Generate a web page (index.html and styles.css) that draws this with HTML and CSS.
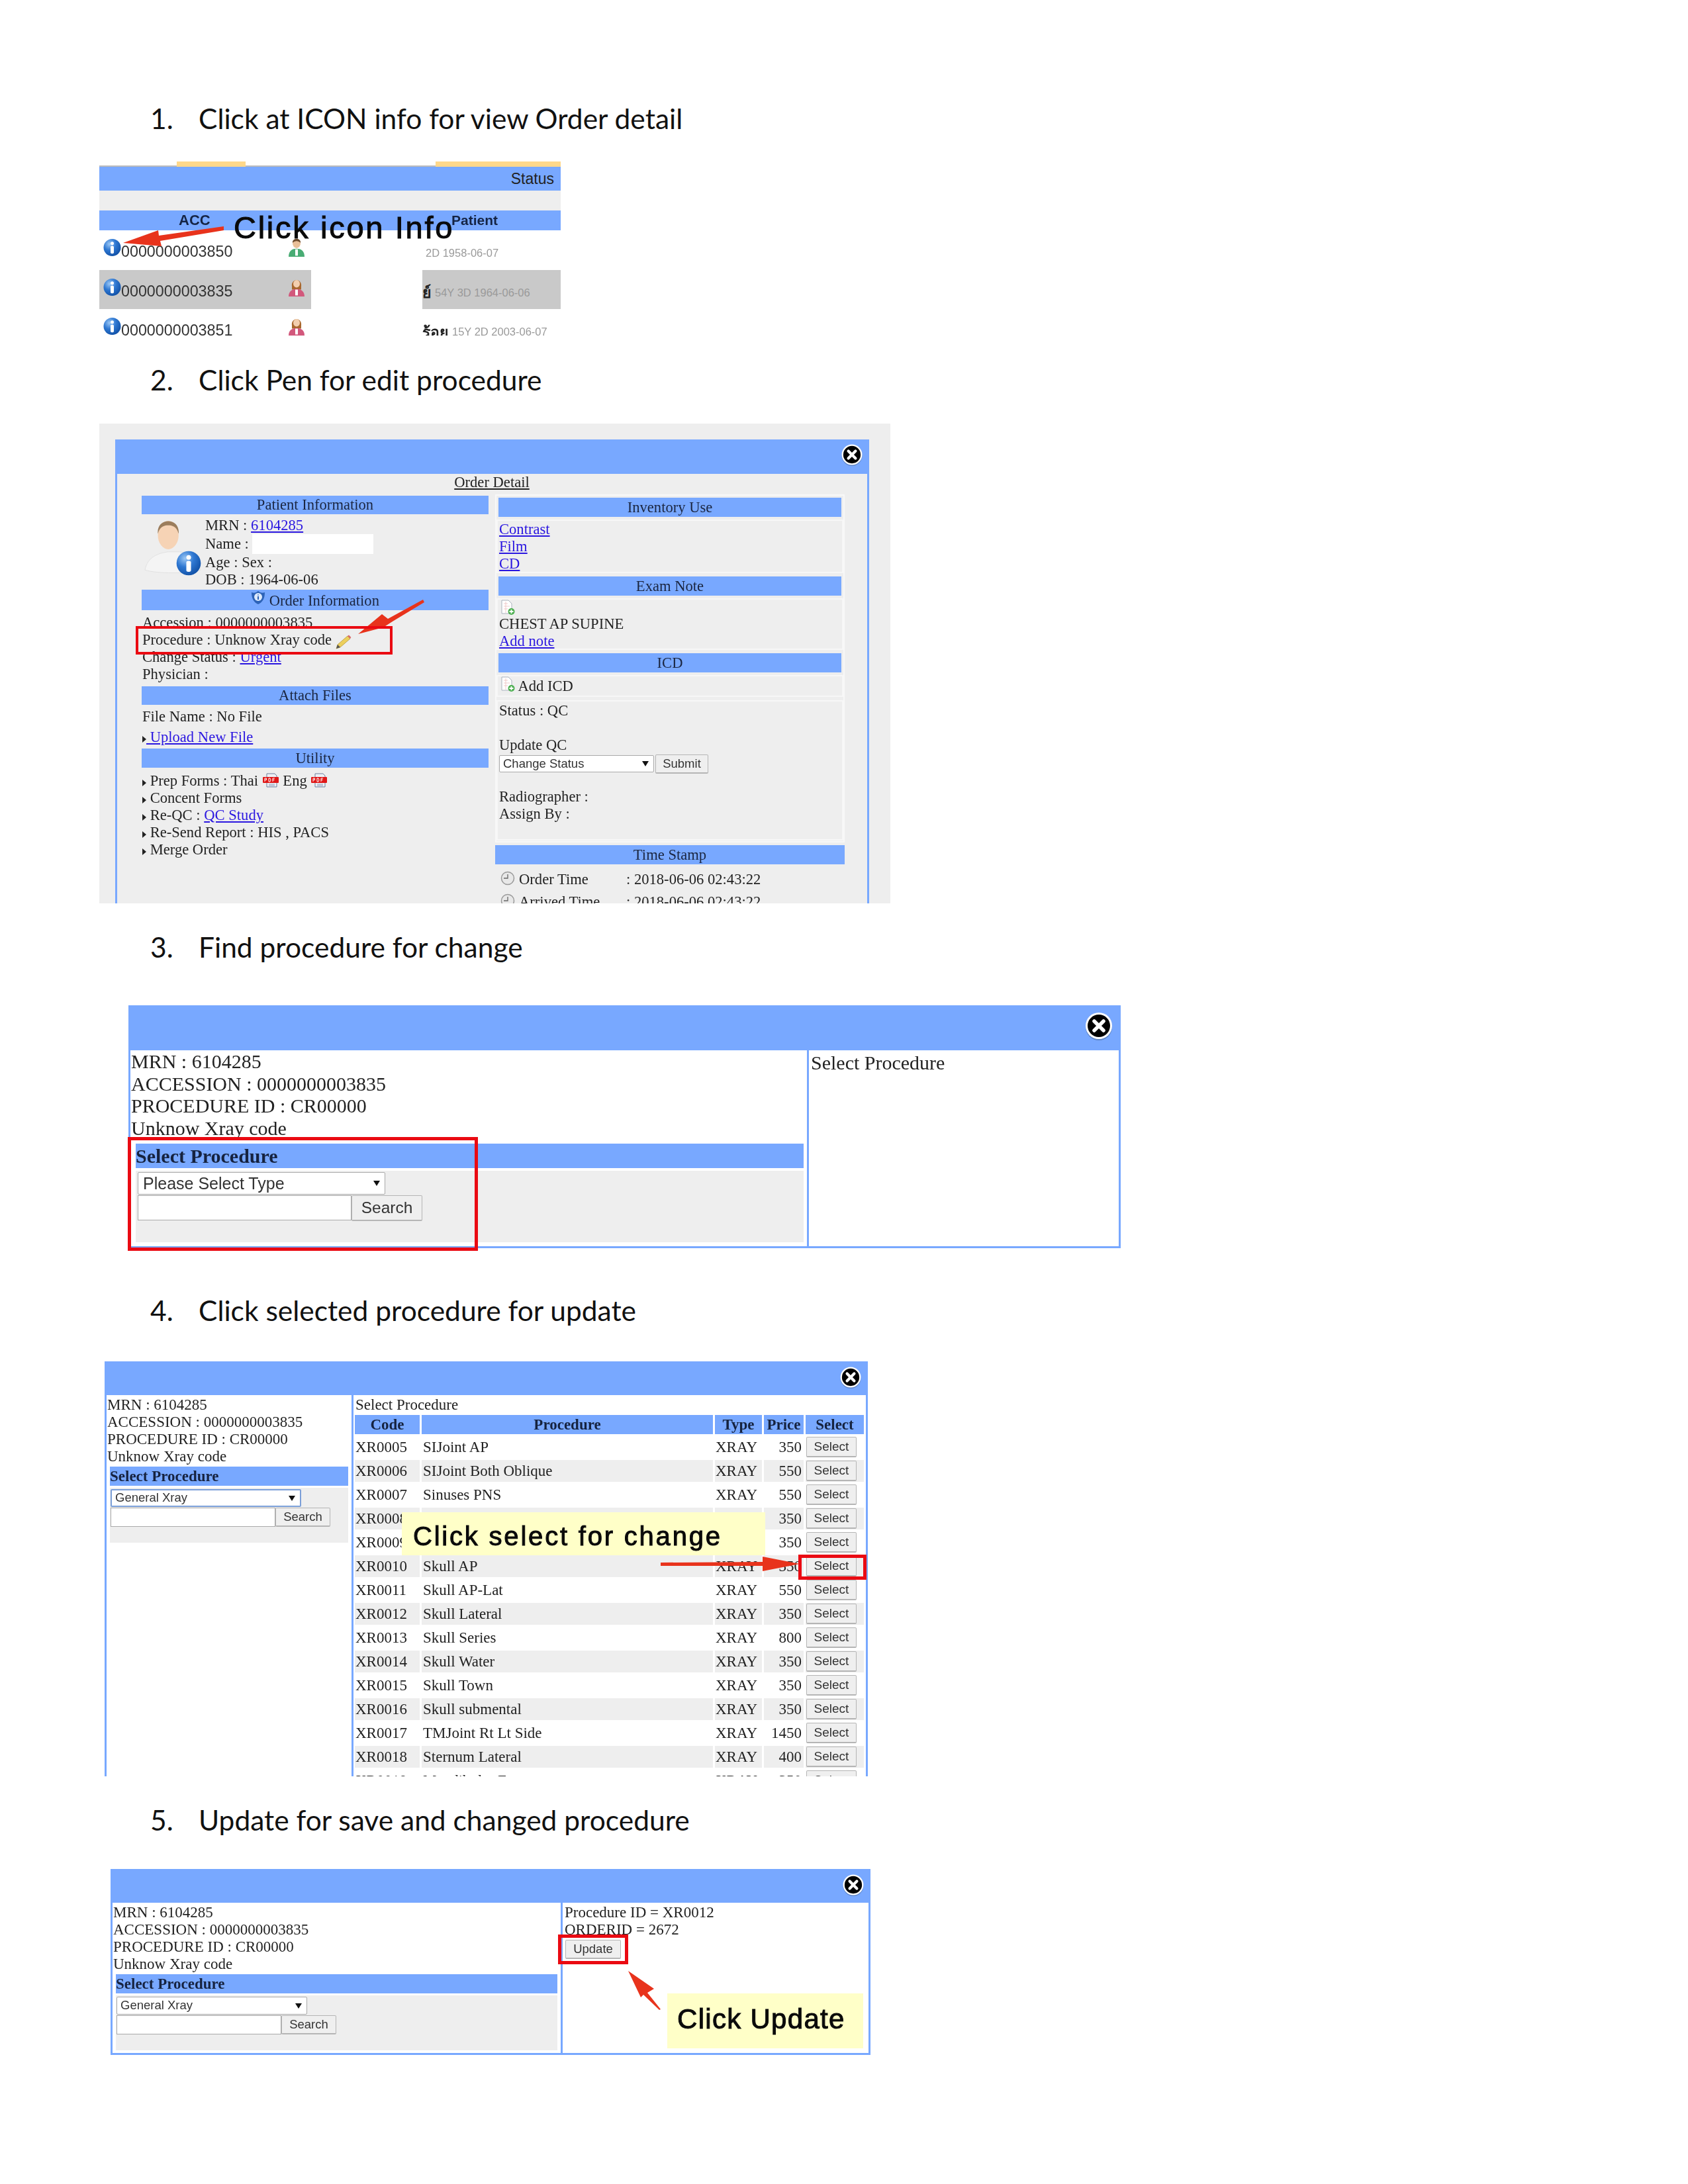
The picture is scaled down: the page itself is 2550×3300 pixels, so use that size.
FILE: index.html
```html
<!DOCTYPE html>
<html lang="en">
<head>
<meta charset="utf-8">
<title>Change procedure guide</title>
<link rel="stylesheet" href="styles.css">
</head>
<body>
<svg class="defs" aria-hidden="true">
  <defs>
    <radialGradient id="gInfo" cx="35%" cy="30%" r="80%"><stop offset="0" stop-color="#9cc8f5"/><stop offset=".45" stop-color="#2f78d2"/><stop offset="1" stop-color="#0c4ba0"/></radialGradient>
    <symbol id="info" viewBox="0 0 28 28">
      <circle cx="14" cy="14" r="13.5" fill="url(#gInfo)"/>
      <circle cx="14" cy="7.5" r="2.6" fill="#fff"/>
      <rect x="11.4" y="11.5" width="5.2" height="12" rx="2" fill="#fff"/>
    </symbol>
    <symbol id="close" viewBox="0 0 44 44">
      <circle cx="22" cy="24" r="20" fill="#4a6a99" opacity=".55"/>
      <circle cx="22" cy="22" r="20" fill="#fff"/>
      <circle cx="22" cy="22" r="17" fill="#000"/>
      <path d="M15 15 L29 29 M29 15 L15 29" stroke="#fff" stroke-width="5.5" stroke-linecap="round"/>
    </symbol>
    <symbol id="personM" viewBox="0 0 26 34" preserveAspectRatio="none">
      <ellipse cx="13" cy="10" rx="6" ry="8" fill="#e9bf98"/>
      <path d="M7 9 C6 0 20 0 19 9 C16 5 10 5 7 9Z" fill="#6b4a2c"/>
      <path d="M1 33 C1 22 7 19 13 19 C19 19 25 22 25 33Z" fill="#49ac74"/>
      <rect x="11" y="20" width="4" height="11" fill="#fff"/>
    </symbol>
    <symbol id="personF" viewBox="0 0 26 34" preserveAspectRatio="none">
      <path d="M6 16 C4 1 22 1 20 16 L20 21 L6 21Z" fill="#a9682e"/>
      <ellipse cx="13" cy="11" rx="5" ry="6.500" fill="#f3cfae"/>
      <path d="M1 33 C1 23 7 20 13 20 C19 20 25 23 25 33Z" fill="#d2587c"/>
      <rect x="11" y="21" width="4" height="10" fill="#fff"/>
    </symbol>
    <symbol id="pencil" viewBox="0 0 24 22">
      <path d="M1 21 L3 15 L18 2 L22 6 L7 19Z" fill="#eccf5c" stroke="#b79a3a" stroke-width=".8"/>
      <path d="M18 2 L20 0.6 L23.4 4 L22 6Z" fill="#d86a6a"/>
      <path d="M1 21 L3 15 L7 19Z" fill="#555"/>
    </symbol>
    <symbol id="pdf" viewBox="0 0 24 23">
      <path d="M6 1 H18 L21 4 V21 H6Z" fill="#eef1f6" stroke="#6f7f9b"/>
      <path d="M9 17 H18 M9 19 H18" stroke="#8ea0bb"/>
      <rect x="0" y="6" width="24" height="9" rx="1" fill="#e01818"/>
      <path d="M3 13 V8 H5.500 V10.500 H3 M9 8 V13 H11 L12 10.500 L11 8Z M15 13 V8 H18 M15 10.500 H17.500" stroke="#fff" fill="none"/>
    </symbol>
    <symbol id="docAdd" viewBox="0 0 22 24">
      <path d="M2 1 H12 L17 6 V21 H2Z" fill="#fff" stroke="#aab2bd"/>
      <path d="M5 6 H11 M5 10 H14 M5 14 H11 M8 3 V20" stroke="#eab7b7" stroke-width=".7"/>
      <circle cx="16.500" cy="18" r="5" fill="#4caf50"/>
      <path d="M16.500 15 V21 M13.500 18 H19.500" stroke="#fff" stroke-width="1.800"/>
    </symbol>
    <symbol id="clock" viewBox="0 0 22 22">
      <circle cx="11" cy="11" r="9.500" fill="#e8e8e8" stroke="#9a9a9a" stroke-width="1.500"/>
      <path d="M11 5 V11 H5" stroke="#666" fill="none" stroke-width="1.300"/>
    </symbol>
    <symbol id="shield" viewBox="0 0 22 22">
      <path d="M11 1 L14 3 C16 4 19 4 21 3 C21 12 18 18 11 21 C4 18 1 12 1 3 C3 4 6 4 8 3Z" fill="#2d63b8"/>
      <circle cx="11" cy="10" r="6" fill="#dce9fb"/>
      <path d="M11 6.500 V7.500 M11 9 V14" stroke="#2d63b8" stroke-width="2"/>
    </symbol>
    <symbol id="avatar" viewBox="0 0 90 84">
      <path d="M2 78 C6 58 22 52 38 50 L56 50 C72 52 84 60 88 78 C70 84 20 84 2 78Z" fill="#f4f4f4" stroke="#e0e0e0"/>
      <ellipse cx="38" cy="24" rx="16" ry="22" fill="#f6d3b5"/>
      <path d="M22 22 C19 -4 57 -4 54 22 C51 10 43 9 38 9 C33 9 25 10 22 22Z" fill="#9b7d5c"/>
    </symbol>
  </defs>
</svg>

<main class="page">
  <h2 class="step"><span class="num">1.</span><span>Click at ICON info for view Order detail</span></h2>
  <section class="shot shot1">
    <div class="tabs"><i class="tab t1"></i><i class="tab t2"></i></div>
    <div class="statusbar">Status</div>
    <div class="greybar"></div>
    <div class="colbar"><span class="acc">ACC</span><span class="pat">Patient</span></div>
    <div class="qrow">
      <div class="qcell"><svg class="qinfo"><use href="#info"/></svg><span class="qnum">0000000003850</span><svg class="qperson"><use href="#personM"/></svg></div>
      <div class="qgap"></div>
      <div class="qpat"><span class="qdate first">2D 1958-06-07</span></div>
    </div>
    <div class="qrow grey">
      <div class="qcell"><svg class="qinfo"><use href="#info"/></svg><span class="qnum">0000000003835</span><svg class="qperson"><use href="#personF"/></svg></div>
      <div class="qgap"></div>
      <div class="qpat"><b class="thai">ย์</b><span class="qdate">54Y 3D 1964-06-06</span></div>
    </div>
    <div class="qrow">
      <div class="qcell"><svg class="qinfo"><use href="#info"/></svg><span class="qnum">0000000003851</span><svg class="qperson"><use href="#personF"/></svg></div>
      <div class="qgap"></div>
      <div class="qpat"><b class="thai">ร้อย</b><span class="qdate">15Y 2D 2003-06-07</span></div>
    </div>
    <div class="note note1">Click icon Info</div>
    <svg class="overlay" viewBox="0 0 697 263"><polygon class="arrow" points="36,123 89,104 90,112 188,98 188,104 92,120 94,128"/></svg>
  </section>

  <h2 class="step"><span class="num">2.</span><span>Click Pen for edit procedure</span></h2>
  <section class="shot shot2">
    <div class="win2">
      <div class="winhead head2"><svg class="closeic"><use href="#close"/></svg></div>
      <div class="body2">
        <div class="title2">Order Detail</div>
        <div class="cols2">
          <div class="left2">
            <div class="hdr h28">Patient Information</div>
            <div class="patient">
              <div class="avatarbox"><svg class="avatar"><use href="#avatar"/></svg><svg class="avinfo"><use href="#info"/></svg></div>
              <div class="pinfo">
                <div>MRN : <a href="#">6104285</a></div>
                <div class="nameline">Name : <i class="namebox"></i></div>
                <div>Age : Sex :</div>
                <div>DOB : 1964-06-06</div>
              </div>
            </div>
            <div class="hdr h31"><svg class="shield"><use href="#shield"/></svg> Order Information</div>
            <div class="lines orderlines">
              <div>Accession : 0000000003835</div>
              <div>Procedure : Unknow Xray code <svg class="pencil"><use href="#pencil"/></svg></div>
              <div>Change Status : <a href="#">Urgent</a></div>
              <div>Physician :</div>
            </div>
            <div class="hdr h28">Attach Files</div>
            <div class="lines files">
              <div>File Name : No File</div>
              <div class="upload"><i class="tri"></i><a href="#"> Upload New File</a></div>
            </div>
            <div class="hdr h29">Utility</div>
            <div class="lines util">
              <div><i class="tri"></i> Prep Forms : Thai <svg class="pdf"><use href="#pdf"/></svg> Eng <svg class="pdf"><use href="#pdf"/></svg></div>
              <div><i class="tri"></i> Concent Forms</div>
              <div><i class="tri"></i> Re-QC : <a href="#">QC Study</a></div>
              <div><i class="tri"></i> Re-Send Report : HIS , PACS</div>
              <div><i class="tri"></i> Merge Order</div>
            </div>
          </div>
          <div class="right2">
            <div class="box">
              <div class="hdr h29">Inventory Use</div>
              <div class="inner inv"><a href="#">Contrast </a><br><a href="#">Film</a><br><a href="#">CD </a></div>
              <div class="hdr h29">Exam Note</div>
              <div class="inner exam"><svg class="doc docblock"><use href="#docAdd"/></svg>CHEST AP SUPINE<br><a href="#">Add note</a></div>
              <div class="hdr h29">ICD</div>
              <div class="inner icd"><svg class="doc"><use href="#docAdd"/></svg> Add ICD</div>
              <div class="inner status">
                <div>Status : QC</div>
                <div class="upq">Update QC</div>
                <div class="qcctl"><div class="sel sel-qc"><span>Change Status</span><i class="caret"></i></div><button class="btn btn-sub" type="button">Submit</button></div>
                <div class="radio">Radiographer :</div>
                <div>Assign By :</div>
              </div>
            </div>
            <div class="hdr h29 stamp">Time Stamp</div>
            <div class="timerow"><svg class="clock"><use href="#clock"/></svg><span class="tlabel">Order Time</span><span>: 2018-06-06 02:43:22</span></div>
            <div class="timerow"><svg class="clock"><use href="#clock"/></svg><span class="tlabel">Arrived Time</span><span>: 2018-06-06 02:43:22</span></div>
          </div>
        </div>
      </div>
    </div>
    <svg class="overlay" viewBox="0 0 1195 725">
      <polygon class="arrow" points="391,318 427,288 436,295 489,266 491,270 443,299 429,308"/>
    </svg>
    <div class="redbox red2"></div>
  </section>

  <h2 class="step"><span class="num">3.</span><span>Find procedure for change</span></h2>
  <section class="shot shot3">
    <div class="win big">
      <div class="winhead"><svg class="closeic"><use href="#close"/></svg></div>
      <div class="panes">
        <div class="pane-l">
          <div>MRN : 6104285</div>
          <div>ACCESSION : 0000000003835</div>
          <div>PROCEDURE ID : CR00000</div>
          <div>Unknow Xray code</div>
          <div class="selhead">Select Procedure</div>
          <div class="selbody">
            <div class="sel sel-type"><span>Please Select Type</span><i class="caret"></i></div>
            <div class="searchrow"><div class="inp"></div><button class="btn btn-search" type="button">Search</button></div>
          </div>
        </div>
        <div class="pane-r">Select Procedure</div>
      </div>
    </div>
    <div class="redbox red3"></div>
  </section>

  <h2 class="step"><span class="num">4.</span><span>Click selected procedure for update</span></h2>
  <section class="shot shot4">
    <div class="win">
      <div class="winhead"><svg class="closeic"><use href="#close"/></svg></div>
      <div class="panes">
        <div class="pane-l">
          <div>MRN : 6104285</div>
          <div>ACCESSION : 0000000003835</div>
          <div>PROCEDURE ID : CR00000</div>
          <div>Unknow Xray code</div>
          <div class="selhead">Select Procedure</div>
          <div class="selbody">
            <div class="sel sel-focus"><span>General Xray</span><i class="caret"></i></div>
            <div class="searchrow"><div class="inp"></div><button class="btn btn-search" type="button">Search</button></div>
          </div>
        </div>
        <div class="pane-r">
          <div>Select Procedure</div>
          <table class="proc">
            <colgroup><col class="c1"><col class="c2"><col class="c3"><col class="c4"><col class="c5"></colgroup>
            <thead><tr><th>Code</th><th>Procedure</th><th>Type</th><th>Price</th><th>Select</th></tr></thead>
            <tbody>
              <tr><td>XR0005</td><td>SIJoint AP</td><td>XRAY</td><td class="pr">350</td><td><button class="btn btn-sel" type="button">Select</button></td></tr>
              <tr><td>XR0006</td><td>SIJoint Both Oblique</td><td>XRAY</td><td class="pr">550</td><td><button class="btn btn-sel" type="button">Select</button></td></tr>
              <tr><td>XR0007</td><td>Sinuses PNS</td><td>XRAY</td><td class="pr">550</td><td><button class="btn btn-sel" type="button">Select</button></td></tr>
              <tr><td>XR0008</td><td>Sinuses Water</td><td>XRAY</td><td class="pr">350</td><td><button class="btn btn-sel" type="button">Select</button></td></tr>
              <tr><td>XR0009</td><td>Sinuses Lateral</td><td>XRAY</td><td class="pr">350</td><td><button class="btn btn-sel" type="button">Select</button></td></tr>
              <tr><td>XR0010</td><td>Skull AP</td><td>XRAY</td><td class="pr">350</td><td><button class="btn btn-sel" type="button">Select</button></td></tr>
              <tr><td>XR0011</td><td>Skull AP-Lat</td><td>XRAY</td><td class="pr">550</td><td><button class="btn btn-sel" type="button">Select</button></td></tr>
              <tr><td>XR0012</td><td>Skull Lateral</td><td>XRAY</td><td class="pr">350</td><td><button class="btn btn-sel" type="button">Select</button></td></tr>
              <tr><td>XR0013</td><td>Skull Series</td><td>XRAY</td><td class="pr">800</td><td><button class="btn btn-sel" type="button">Select</button></td></tr>
              <tr><td>XR0014</td><td>Skull Water</td><td>XRAY</td><td class="pr">350</td><td><button class="btn btn-sel" type="button">Select</button></td></tr>
              <tr><td>XR0015</td><td>Skull Town</td><td>XRAY</td><td class="pr">350</td><td><button class="btn btn-sel" type="button">Select</button></td></tr>
              <tr><td>XR0016</td><td>Skull submental</td><td>XRAY</td><td class="pr">350</td><td><button class="btn btn-sel" type="button">Select</button></td></tr>
              <tr><td>XR0017</td><td>TMJoint Rt Lt Side</td><td>XRAY</td><td class="pr">1450</td><td><button class="btn btn-sel" type="button">Select</button></td></tr>
              <tr><td>XR0018</td><td>Sternum Lateral</td><td>XRAY</td><td class="pr">400</td><td><button class="btn btn-sel" type="button">Select</button></td></tr>
              <tr><td>XR0019</td><td>Mandibular F</td><td>XRAY</td><td class="pr">350</td><td><button class="btn btn-sel" type="button">Select</button></td></tr>
            </tbody>
          </table>
        </div>
      </div>
    </div>
    <div class="note note4">Click select for change</div>
    <svg class="overlay" viewBox="0 0 1153 627"><polygon class="arrow" points="840,304 994,303 994,295 1050,306 994,317 994,309 840,309"/></svg>
    <div class="redbox red4"></div>
  </section>

  <h2 class="step"><span class="num">5.</span><span>Update for save and changed procedure</span></h2>
  <section class="shot shot5">
    <div class="win">
      <div class="winhead"><svg class="closeic"><use href="#close"/></svg></div>
      <div class="panes">
        <div class="pane-l">
          <div>MRN : 6104285</div>
          <div>ACCESSION : 0000000003835</div>
          <div>PROCEDURE ID : CR00000</div>
          <div>Unknow Xray code</div>
          <div class="selhead">Select Procedure</div>
          <div class="selbody">
            <div class="sel"><span>General Xray</span><i class="caret"></i></div>
            <div class="searchrow"><div class="inp"></div><button class="btn btn-search" type="button">Search</button></div>
          </div>
        </div>
        <div class="pane-r">
          <div>Procedure ID = XR0012</div>
          <div>ORDERID = 2672</div>
          <button class="btn btn-update" type="button">Update</button>
        </div>
      </div>
    </div>
    <div class="note note5">Click Update</div>
    <svg class="overlay" viewBox="0 0 1148 281"><polygon class="arrow" points="782,154 821,181 811,187 831,212 829,213 805,190 801,194"/></svg>
    <div class="redbox red5"></div>
  </section>
</main>
</body>
</html>
```

FILE: styles.css
```css
:root {
  --blue: #78a8ff;
  --grey: #eeeeee;
  --red: #ea0a12;
  --arrow: #e8331c;
  --link: #2a16e0;
}
html, body { margin: 0; padding: 0; background: #fff; }
body { width: 2550px; min-height: 3300px; }
.defs { position: absolute; width: 0; height: 0; }
.page { padding-top: 149px; }

.step {
  display: flex;
  height: 60px;
  align-items: center;
  margin: 0;
  padding-left: 227px;
  font: 400 42.500px/60px Lato, sans-serif;
  color: #111;
}
.num { width: 73px; }

.shot { position: relative; filter: blur(.55px); }
.overlay { position: absolute; left: 0; top: 0; width: 100%; height: 100%; pointer-events: none; }
.arrow { fill: var(--arrow); }
.redbox { position: absolute; box-sizing: border-box; border: 5px solid var(--red); }
.note {
  position: absolute;
  font-family: "Liberation Sans", Arial, sans-serif;
  color: #0a0a0a;
  -webkit-text-stroke: 1px #0a0a0a;
  white-space: nowrap;
}
a { color: var(--link); }

/* Step 1 */
.shot1 {
  width: 697px; height: 263px;
  margin: 35px 0 37px 150px;
  overflow: hidden;
  font-family: "Liberation Sans", Arial, sans-serif;
  color: #222;
}
.tabs { height: 8px; background: #ffd88a; position: relative; }
.tab { position: absolute; top: 0; height: 8px; background: #fff; border-bottom: 2px solid #bbb; box-sizing: border-box; }
.t1 { left: 0; width: 117px; }
.t2 { left: 221px; width: 287px; }
.statusbar { height: 36px; background: var(--blue); text-align: right; padding-right: 10px; font-size: 23px; line-height: 36px; color: #222; }
.greybar { height: 30px; background: var(--grey); }
.colbar { height: 30px; background: var(--blue); position: relative; font-weight: bold; font-size: 22px; line-height: 30px; color: #152444; }
.acc { position: absolute; left: 120px; top: 0; }
.pat { position: absolute; left: 532px; top: 0; font-size: 21px; }
.qrow { display: grid; grid-template-columns: 320px 168px 209px; height: 59.500px; align-items: stretch; }
.qcell { display: flex; align-items: flex-start; padding-left: 6px; }
.qinfo { width: 27px; height: 28px; margin-top: 12px; flex: none; }
.qnum { font-size: 23.300px; line-height: 28px; width: 168px; margin-top: 18px; flex: none; margin-left: 0; color: #333; }
.qperson { width: 26px; height: 30px; margin: 11px 0 0 84px; flex: none; }
.qrow.grey .qcell, .qrow.grey .qpat { background: #c9c9c9; }
.qpat { display: flex; align-items: center; padding-top: 10px; box-sizing: border-box; }
.thai { font-size: 23px; color: #222; margin-right: 6px; font-family: "Noto Sans", "DejaVu Sans", sans-serif; }
.qdate { font-size: 16.500px; color: #9a9a9a; }
.qdate.first { margin-left: 5px; }
.note1 { left: 203px; top: 77px; font-size: 47px; line-height: 46px; letter-spacing: 2.700px; }

/* Step 2 */
.shot2 {
  width: 1195px; height: 725px;
  margin: 36px 0 36px 150px;
  background: var(--grey);
  overflow: hidden;
  font-family: "Liberation Serif", "Times New Roman", serif;
  font-size: 22.600px;
  line-height: 26px;
  color: #222;
}
.win2 { margin: 24px 32px 0 24px; border: solid var(--blue); border-width: 0 3px; height: 720px; }
.winhead { position: relative; background: var(--blue); }
.head2 { height: 52px; margin: 0 -3px; }
.closeic { position: absolute; width: 34px; height: 34px; }
.head2 .closeic { right: 9px; top: 6px; }
.title2 { height: 26px; text-align: center; text-decoration: underline; line-height: 26px; width: 1132px; }
.cols2 { display: flex; margin-top: 5px; padding-left: 37px; }
.left2 { width: 524px; margin-top: 2px; }
.right2 { width: 526px; margin-left: 12px; }
.hdr { background: var(--blue); text-align: center; color: #1b2640; }
.h28 { height: 28px; line-height: 28px; }
.h29 { height: 29px; line-height: 29px; }
.h31 { height: 31px; line-height: 33px; }
.patient { display: flex; height: 114px; }
.avatarbox { position: relative; width: 96px; flex: none; }
.avatar { position: absolute; left: 3px; top: 7px; width: 88px; height: 84px; }
.avinfo { position: absolute; left: 52px; top: 55px; width: 38px; height: 38px; }
.pinfo { padding-top: 4px; }
.nameline { display: flex; align-items: center; height: 30px; gap: 5px; }
.namebox { width: 183px; height: 30px; background: #fff; }
.shield { width: 22px; height: 22px; vertical-align: 1px; }
.lines { padding-left: 1px; }
.orderlines { padding-top: 6px; height: 109px; }
.pencil { width: 24px; height: 22px; vertical-align: -3px; margin: -4px 0; }
.files { padding-top: 5px; height: 61px; }
.upload { margin-top: 5px; }
.tri { display: inline-block; width: 0; height: 0; border: 5px solid transparent; border-left: 6px solid #222; border-right: 0; vertical-align: -1px; }
.util { padding-top: 7px; }
.pdf { width: 24px; height: 23px; vertical-align: 2px; margin: -6px 1px; }
.box { border: 2px solid #f8f8f8; padding: 3px 3px 1px; margin: 0 0 0 -2px; width: 518px; }
.inner { border: 2px solid #f7f7f7; padding: 0 2px; margin: 4px -3px 5px; box-sizing: border-box; }
.inv { height: 81px; }
.exam { height: 78px; }
.icd { height: 33px; line-height: 28px; }
.status { height: 212px; margin: 4px -3px 0; padding-top: 1px; }
.doc { width: 22px; height: 24px; margin-left: 2px; vertical-align: -2px; }
.docblock { display: block; }
.upq { margin-top: 26px; }
.qcctl { display: flex; align-items: center; height: 30px; margin-top: 0; }
.radio { margin-top: 22px; }
.stamp { margin: 4px 0 0 -2px; width: 528px; }
.timerow { display: flex; align-items: center; height: 34px; padding-left: 6px; }
.timerow:nth-child(3) { margin-top: 6px; }
.clock { width: 22px; height: 22px; flex: none; margin-right: 6px; margin-top: -4px; }
.tlabel { width: 162px; }
.red2 { left: 55px; top: 306px; width: 388px; height: 43px; border-width: 4px; }

/* Windows steps 3-5 */
.win {
  box-sizing: border-box;
  height: 100%;
  font-family: "Liberation Serif", "Times New Roman", serif;
  font-size: 23px;
  line-height: 26px;
  color: #222;
  background: #fff;
  border: solid var(--blue);
  border-width: 0 3px 3px;
  display: flex;
  flex-direction: column;
}
.win .winhead { height: 51px; margin: 0 -3px; flex: none; }
.win .closeic { right: 9px; top: 7px; }
.panes { display: flex; flex: 1; min-height: 0; }
.pane-l { flex: none; border-right: 3px solid var(--blue); padding: 2px 0 0 1px; box-sizing: border-box; }
.pane-r { flex: 1; padding: 2px 0 0 3px; min-width: 0; }
.selhead { background: var(--blue); font-weight: bold; height: 29px; line-height: 29px; margin: 2px 5px 3px 4px; color: #16233f; }
.selbody { background: var(--grey); height: 83px; margin: 0 5px 0 4px; padding: 2px 0 0 1px; box-sizing: border-box; font-family: "Liberation Sans", Arial, sans-serif; font-size: 18px; }
.sel { display: flex; align-items: center; justify-content: space-between; box-sizing: border-box; width: 288px; height: 27px; padding: 0 7px 0 5px; background: #fff; border: 1px solid #a9a9a9; border-radius: 2px; font-family: "Liberation Sans", Arial, sans-serif; font-size: 18.500px; line-height: 1; color: #333; }
.sel-focus { border: 2px solid #7b9fd8; }
.caret { width: 0; height: 0; border: 5px solid transparent; border-top: 8px solid #111; border-bottom: 0; }
.searchrow { display: flex; margin-top: 1px; }
.inp { box-sizing: border-box; width: 249px; height: 29px; background: #fff; border: 1px solid #a9a9a9; }
.btn { box-sizing: border-box; margin: 0; padding: 0; background: #efefef; border: 1px solid #b5b5b5; border-bottom-width: 2px; border-radius: 2px; font-family: "Liberation Sans", Arial, sans-serif; color: #333; }
.btn-search { width: 83px; height: 29px; font-size: 18.500px; }
.btn-sub { width: 80px; height: 29px; font-size: 18.500px; margin-left: 2px; }
.sel-qc { width: 234px; height: 26px; margin-left: 0; }

/* Step 3 */
.shot3 { width: 1499px; height: 367px; margin: 58px 0 64px 194px; }
.big { font-size: 30px; line-height: 33.500px; }
.shot3 .winhead { height: 68px; }
.shot3 .closeic { width: 44px; height: 44px; right: 11px; top: 9px; }
.shot3 .pane-l { width: 1025px; padding-top: 0; }
.shot3 .selhead { height: 37px; line-height: 37px; margin: 7px 5px 4px 7px; }
.shot3 .selbody { height: 108px; margin: 0 5px 0 7px; padding: 2px 0 0 3px; font-size: 24.500px; }
.shot3 .sel { width: 374px; height: 34px; font-size: 25px; padding-left: 7px; }
.shot3 .searchrow { margin-top: 1px; }
.shot3 .inp { width: 323px; height: 38px; }
.shot3 .btn-search { width: 107px; height: 39px; font-size: 24.500px; }
.red3 { left: -1px; top: 199px; width: 529px; height: 172px; }

/* Step 4 */
.shot4 { width: 1153px; height: 627px; margin: 47px 0 36px 158px; overflow: hidden; }
.shot4 .win { height: 680px; }
.shot4 .pane-l { width: 373px; }
.proc { border-collapse: separate; border-spacing: 3px; table-layout: fixed; width: 772px; margin: -1px 0 0 -4px; font-size: 23px; line-height: 26px; }
.c1 { width: 98px; } .c2 { width: 440px; } .c3 { width: 71px; } .c4 { width: 60px; } .c5 { width: 88px; }
.proc th { background: var(--blue); height: 29px; padding: 0; font-size: 23px; color: #16233f; }
.proc td { height: 33px; padding: 0 0 0 1px; white-space: nowrap; }
.proc td:nth-child(2) { padding-left: 2px; }
.proc tbody tr:nth-child(even) td { background: var(--grey); }
.pr { text-align: right; padding-right: 3px !important; }
.btn-sel { display: block; width: 76px; height: 31px; margin-left: 0; font-size: 19px; }
.note4 { left: 449px; top: 228px; width: 549px; height: 65px; box-sizing: border-box; padding: 14px 0 0 17px; background: #ffffc8; font-size: 40px; line-height: 44px; letter-spacing: 2.800px; }
.red4 { left: 1048px; top: 292px; width: 103px; height: 38px; }

/* Step 5 */
.shot5 { width: 1148px; height: 281px; margin: 44px 0 0 167px; }
.shot5 .pane-l { width: 680px; }
.btn-update { display: block; width: 84px; height: 29px; margin: 2px 0 0 1px; font-size: 18.500px; }
.note5 { left: 841px; top: 188px; width: 296px; height: 83px; box-sizing: border-box; padding: 16px 0 0 15px; background: #ffffc8; font-size: 42px; line-height: 46px; letter-spacing: 1.300px; }
.red5 { left: 676px; top: 99px; width: 106px; height: 45px; }
```
